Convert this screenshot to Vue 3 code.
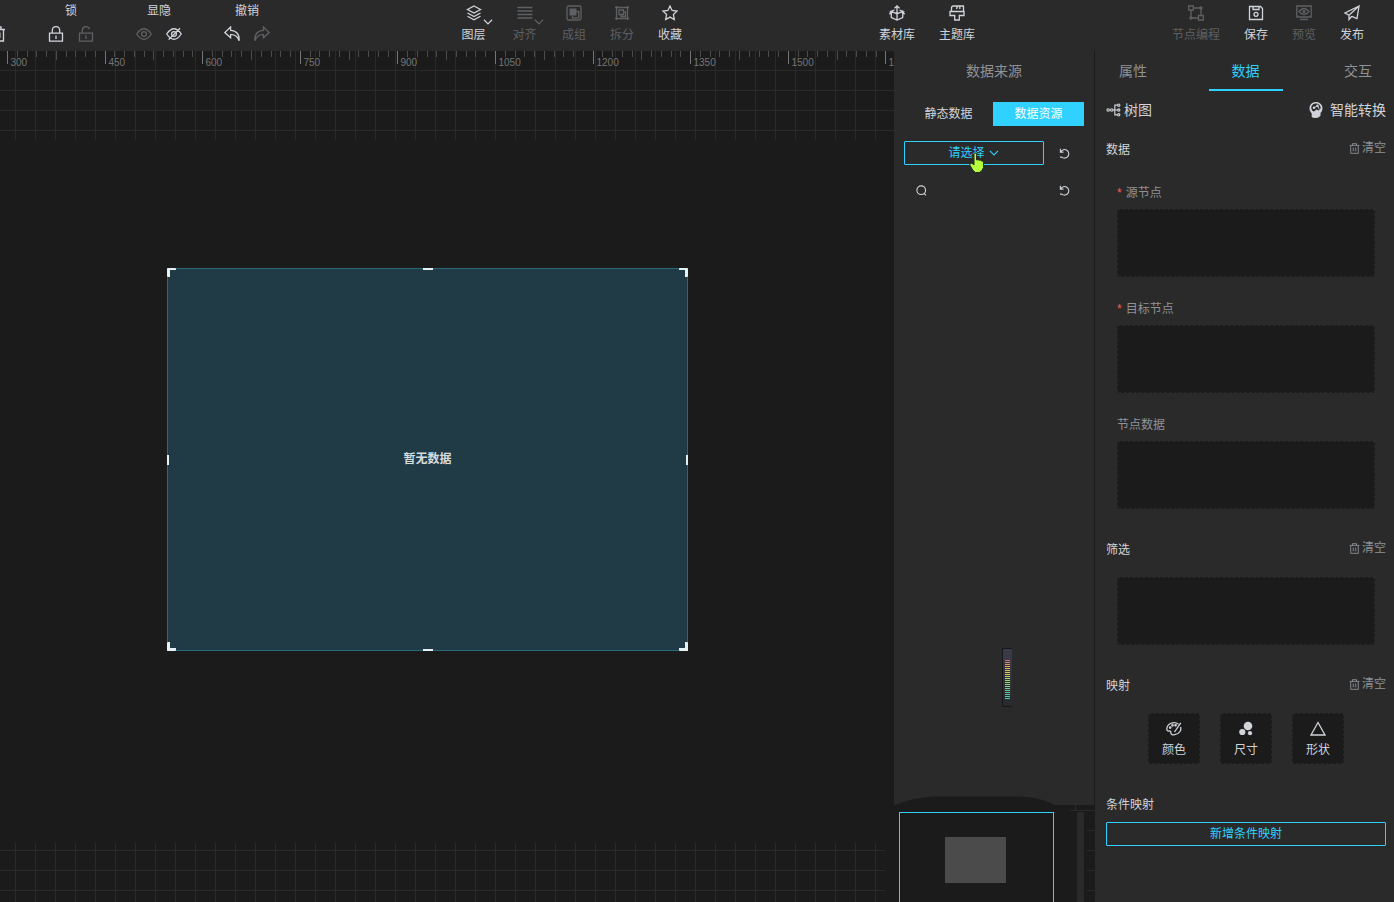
<script setup>
import { ref } from 'vue'

const groups = [
  { label: '锁', items: [{ icon: 'lock' }, { icon: 'unlock', off: true }] },
  { label: '显隐', items: [{ icon: 'eye', off: true }, { icon: 'eye-off' }] },
  { label: '撤销', items: [{ icon: 'undo' }, { icon: 'redo', off: true }] }
]
const arrange = [
  { icon: 'layers', label: '图层', menu: true },
  { icon: 'align', label: '对齐', menu: true, off: true },
  { icon: 'group', label: '成组', off: true },
  { icon: 'split', label: '拆分', off: true },
  { icon: 'star', label: '收藏' }
]
const library = [
  { icon: 'box', label: '素材库' },
  { icon: 'brush', label: '主题库' }
]
const actions = [
  { icon: 'nodes', label: '节点编程', off: true, long: true },
  { icon: 'save', label: '保存' },
  { icon: 'preview', label: '预览', off: true },
  { icon: 'send', label: '发布' }
]
const ticks = Array.from({ length: 92 }, (_, i) => ({
  x: Math.round(7 + i * 9.76) + 0.5,
  h: i % 10 === 0 ? 13 : i % 5 === 0 ? 9 : 6,
  major: i % 10 === 0,
  label: 300 + i * 15
}))
const tabs = ['属性', '数据', '交互']
const tab = ref('数据')
const fields = [
  { label: '源节点', required: true },
  { label: '目标节点', required: true },
  { label: '节点数据' }
]
const mappings = [
  { icon: 'palette', label: '颜色' },
  { icon: 'bubbles', label: '尺寸' },
  { icon: 'triangle', label: '形状' }
]
const handles = ['tl', 'tr', 'bl', 'br', 't', 'b', 'l', 'r']
const levels = ['#3a3c44', '#3a3c44', '#3a3c44', '#e0685c', '#e0865c', '#e0985c', '#e0a85c', '#e0b45c', '#dcc060', '#d8c860', '#d4d064', '#c8d068', '#b8d06c', '#a8d070', '#9cd078', '#8cd080', '#7cd088', '#70d090', '#64cc98', '#5cc8a0', '#58c8a8', '#54c8b0', '#50c8b8']
</script>

<template>
  <div class="page">
    <svg class="sprite" aria-hidden="true">
      <symbol id="lock" viewBox="0 0 16 16"><path d="M1.500 7.200h13v8h-13zM4.300 7V4.200a3.700 3.700 0 0 1 7.400 0V7M8 9.500v3.500" /></symbol>
      <symbol id="unlock" viewBox="0 0 16 16"><path d="M1.500 7.200h13v8h-13zM4.300 7V4.200a3.700 3.700 0 0 1 7.200-1M8 9.500v3.500" /></symbol>
      <symbol id="eye" viewBox="0 0 16 16"><path d="M.7 8Q8-2.500 15.300 8 8 18.500.7 8z" /><circle cx="8" cy="8" r="2.400" /></symbol>
      <symbol id="eye-off" viewBox="0 0 16 16"><path d="M.7 8Q8-2.500 15.300 8 8 18.500.7 8zM2.600 13.600 14 2.200" /><circle cx="8" cy="8" r="2.400" /></symbol>
      <symbol id="undo" viewBox="0 0 16 16"><path d="M6.600 1 .8 6.600l5.800 5.200V8.600c4.600-.4 7 1.600 8.500 6.200.5-6-2-10-8.500-10.400z" /></symbol>
      <symbol id="redo" viewBox="0 0 16 16"><path d="M9.400 1l5.800 5.600-5.800 5.200V8.600c-4.600-.4-7 1.600-8.500 6.200-.5-6 2-10 8.500-10.400z" /></symbol>
      <symbol id="trash" viewBox="0 0 16 16"><path d="M1 3.500h14M5 3.500V1h6v2.500M2.500 3.500V15h11V3.500M6.200 6.500v5.500M9.800 6.500v5.500" /></symbol>
      <symbol id="layers" viewBox="0 0 16 16"><path d="M8 1l6.500 3.500L8 8 1.500 4.500zM1.500 8 8 11.500 14.500 8M1.500 11.300 8 14.800l6.500-3.500" /></symbol>
      <symbol id="align" viewBox="0 0 16 16"><path stroke-width="1.700" d="M.5 2.500h15M.5 6h15M.5 9.500h15M.5 13h15" /></symbol>
      <symbol id="group" viewBox="0 0 16 16"><rect x="1" y="1" width="14" height="14" rx="1.500" /><path class="solid" d="M3.500 3.500h7v7h-7z" /><path d="M10.500 6.500h2.300v6.300H6.500v-2.300" /></symbol>
      <symbol id="split" viewBox="0 0 16 16"><path d="M2.500 1v14M13.500 1v14M1 2.500h14M1 13.500h14M5 5h4.500v4.500H5zM9.500 7h2v4.500H7v-2" /></symbol>
      <symbol id="star" viewBox="0 0 16 16"><path d="M8 1l2.100 4.500 4.900.6-3.600 3.400.9 5L8 12.100l-4.300 2.400.9-5L1 6.100l4.900-.6z" /></symbol>
      <symbol id="box" viewBox="0 0 16 16"><path d="M8 8.500V1M5.500 3.200 8 .9l2.500 2.300M5.500 5 1.800 6.300 8 8.700l6.200-2.400L10.500 5M2.300 6.500v6L8 15l5.700-2.500v-6M8 8.500V15M.5 9.300l1.800-3M15.500 9.300l-1.800-3" /></symbol>
      <symbol id="brush" viewBox="0 0 16 16"><path d="M2.500 6.500V3q0-2 2-2h10v5.500M1 6.500h14v4h-4.700V15H5.700v-4.500H1zM10.800 1v3M7.500 4l1-3" /></symbol>
      <symbol id="nodes" viewBox="0 0 16 16"><path d="M.7 1h4.600v4H.7zM10.500 10.500h4.800v4.500h-4.800zM3 5v8h7.500M5.500 3H13v7.500" /><circle cx="13" cy="3" r="1" /><circle cx="3" cy="13" r="1" /></symbol>
      <symbol id="save" viewBox="0 0 16 16"><path d="M1.500 1.500h11l2 2v11h-13zM5 1.500v3h6v-3" /><circle cx="8" cy="9.300" r="2" /></symbol>
      <symbol id="preview" viewBox="0 0 16 16"><path d="M.8 1h14.400v11H.8zM4 14.500h8M3 6.500q5-6 10 0-5 6-10 0z" /><circle class="solid" cx="8" cy="6.500" r="1.600" /></symbol>
      <symbol id="send" viewBox="0 0 16 16"><path d="M15 1 1 8l4 2.200L15 1l-2 12.500-5.200-2.200M5 10.200v4.300l2.800-3.200" /></symbol>
      <symbol id="down" viewBox="0 0 16 16"><path d="M1.500 4.500 8 11l6.500-6.500" /></symbol>
      <symbol id="refresh" viewBox="0 0 16 16"><path d="M2 1v5h4.500M2.500 5.600A6.200 6.200 0 1 1 4 13.200H1.500" /></symbol>
      <symbol id="search" viewBox="0 0 16 16"><circle cx="7.600" cy="7.600" r="6.300" /><path d="M11.500 12l3 3" /></symbol>
      <symbol id="tree" viewBox="0 0 16 16"><circle cx="1.900" cy="8" r="1.400" /><circle cx="6" cy="8" r="1.400" /><circle cx="14" cy="2.500" r="1.300" /><circle cx="14" cy="8" r="1.300" /><circle cx="14" cy="13.500" r="1.300" /><path d="M7.400 8h5.300M12.700 2.500H9.500v11h3.200M3.300 8h1.300" /></symbol>
      <symbol id="brain" viewBox="0 0 16 16"><path class="solid" fill-rule="evenodd" d="M8 0C3.500 0 1.500 3 1.500 6.500c0 2.500 1.500 3.500 2.200 5V15c2 1.300 4.500 1 6.300.8l2.500-2V11l1.500-2 .5-3C14.300 2.500 11.500 0 8 0zM3.200 5.500C3.500 3 5.500 1.500 8 1.500s4.800 2 4.700 4.700L10.500 8.500 8.500 7.500 6 9.500 4 8.500z" /><circle class="solid" cx="6" cy="5.800" r="1.300" /><circle class="solid" cx="9.500" cy="3.800" r="1.200" /><path stroke-width="1" d="M6 5.800l3.500-2 1.500 3" /></symbol>
      <symbol id="palette" viewBox="0 0 16 16"><path d="M12.500 3.200C8-.2 1 2.500.8 8c0 2 1 2.200 2.400 2 1.500-.2 1.800.8 1.600 2 .2 3 7 2 9.200-1.500.8-1.300 1-3 .6-4.500M14.800 1.800 8.500 11" /><circle cx="4.200" cy="6.600" r=".7" /><circle cx="6.500" cy="4.300" r=".7" /><circle cx="9.600" cy="4.300" r=".7" /></symbol>
      <symbol id="bubbles" viewBox="0 0 16 16"><circle class="solid" cx="10" cy="5" r="4.300" /><circle class="solid" cx="4.300" cy="11" r="3.100" /><circle class="solid" cx="12" cy="12.200" r="2.100" /></symbol>
      <symbol id="triangle" viewBox="0 0 16 16"><path d="M8 1.500 15 14H1z" /></symbol>
    </svg>

    <header class="topbar">
      <div class="edit">
        <button class="icon-btn first" aria-label="删除"><svg class="icon"><use href="#trash" /></svg></button>
        <div v-for="g in groups" :key="g.label" class="pair">
          <span class="pair-label">{{ g.label }}</span>
          <div class="pair-icons">
            <button v-for="i in g.items" :key="i.icon" class="icon-btn" :class="{ off: i.off }" :aria-label="g.label">
              <svg class="icon"><use :href="'#' + i.icon" /></svg>
            </button>
          </div>
        </div>
      </div>
      <nav v-for="(set, n) in [arrange, library, actions]" :key="n" class="tools" :class="'tools-' + n">
        <button v-for="t in set" :key="t.label" class="tool" :class="{ off: t.off, menu: t.menu, long: t.long }">
          <svg class="icon"><use :href="'#' + t.icon" /></svg>
          <span>{{ t.label }}</span>
          <svg v-if="t.menu" class="caret"><use href="#down" /></svg>
        </button>
      </nav>
    </header>

    <main class="work">
      <section class="canvas">
        <div class="grid-top">
          <svg class="ruler">
            <template v-for="t in ticks" :key="t.x">
              <line :x1="t.x" :x2="t.x" y1="0" :y2="t.h" :class="{ major: t.major }" />
              <text v-if="t.major" :x="t.x + 3" y="15">{{ t.label }}</text>
            </template>
          </svg>
        </div>
        <div class="grid-bottom"></div>
        <div class="widget">
          <span>暂无数据</span>
          <i v-for="h in handles" :key="h" class="handle" :class="h"></i>
        </div>
      </section>

      <aside class="source">
        <div class="source-body">
          <h2 class="source-title">数据来源</h2>
          <div class="switch">
            <button>静态数据</button>
            <button class="on">数据资源</button>
          </div>
          <div class="row">
            <div class="picker">
              <select aria-label="数据资源"><option>请选择</option></select>
              <svg class="chev"><use href="#down" /></svg>
              <svg class="hand" viewBox="0 0 16 22"><path d="M5 2.500q0-1.500 1.300-1.500t1.300 1.500V8l1.300-.4 1.300.6 1.200-.1 1.200.8 1.400.3.500 1.300v5l-1.800 3.500-2.500 1.500H6.500L4 18.500.8 13l.4-1.500 1.600-.3L5 13z" /></svg>
            </div>
            <button class="mini" aria-label="刷新"><svg><use href="#refresh" /></svg></button>
          </div>
          <div class="row search">
            <label class="find"><svg><use href="#search" /></svg><input type="text" aria-label="搜索" /></label>
            <button class="mini" aria-label="刷新"><svg><use href="#refresh" /></svg></button>
          </div>
          <div class="meter"><i v-for="(c, i) in levels" :key="i" :style="{ background: c }"></i></div>
          <svg class="bump" viewBox="0 0 160 9" preserveAspectRatio="none"><path d="M0 9Q18 1 40 .5H125Q145 1 160 9z" /></svg>
        </div>
        <div class="minimap">
          <div class="view"><div class="sheet"></div></div>
          <div class="scroll"></div>
          <div class="marks"></div>
        </div>
      </aside>

      <aside class="panel">
        <div class="tabs">
          <button v-for="t in tabs" :key="t" :class="{ on: t === tab }" @click="tab = t">{{ t }}</button>
        </div>
        <div class="content">
          <div class="chart">
            <span class="kind"><svg><use href="#tree" /></svg>树图</span>
            <button class="smart"><svg><use href="#brain" /></svg>智能转换</button>
          </div>
          <div class="head"><h3>数据</h3><button class="clear"><svg><use href="#trash" /></svg>清空</button></div>
          <div class="fields">
            <div v-for="f in fields" :key="f.label" class="field">
              <div class="name"><b v-if="f.required">*</b>{{ f.label }}</div>
              <div class="drop"></div>
            </div>
          </div>
          <div class="head next"><h3>筛选</h3><button class="clear"><svg><use href="#trash" /></svg>清空</button></div>
          <div class="filter drop"></div>
          <div class="head next"><h3>映射</h3><button class="clear"><svg><use href="#trash" /></svg>清空</button></div>
          <div class="maps">
            <button v-for="m in mappings" :key="m.label"><svg class="icon"><use :href="'#' + m.icon" /></svg>{{ m.label }}</button>
          </div>
          <h3 class="cond">条件映射</h3>
          <button class="add">新增条件映射</button>
        </div>
      </aside>
    </main>
  </div>
</template>

<style>
body {
  background: #1b1b1b;
}
</style>

<style scoped>
.page {
  height: 100vh;
  display: flex;
  flex-direction: column;
  overflow: hidden;
  color: #d0d4da;
  font: 12px/16px "Liberation Sans", "Noto Sans CJK SC", sans-serif;
}
.page * { box-sizing: border-box; }
.sprite { position: absolute; width: 0; height: 0; }
button, select, input {
  font: inherit;
  color: inherit;
  background: none;
  border: 0;
  padding: 0;
  margin: 0;
}
h2, h3 { margin: 0; font-weight: 400; font-size: 12px; }
svg { fill: none; stroke: currentColor; stroke-width: 1.3; flex: none; }
.solid { fill: currentColor; stroke: none; }
.icon { width: 16px; height: 16px; display: block; }
.off { color: #5e6063; }

.topbar {
  height: 51px;
  flex: none;
  display: flex;
  justify-content: space-between;
  padding-right: 18px;
  background: #2a2a2a;
}
.edit { width: 275px; display: flex; gap: 28px; margin-top: 3px; }
.pair, .first { flex: none; }
.pair-label { display: block; text-align: center; }
.pair-icons { display: flex; }
.icon-btn { width: 30px; height: 30px; display: flex; align-items: center; justify-content: center; }
.first { margin: 16px 0 0 -17px; }
.tools { display: flex; }
.tool {
  position: relative;
  width: 48px;
  display: flex;
  flex-direction: column;
  align-items: center;
  gap: 6px;
  padding-top: 5px;
  white-space: nowrap;
}
.tool.menu { width: 51px; }
.tool.long { width: 72px; }
.tools-1 .tool { width: 60px; }
.caret { position: absolute; left: 35px; top: 17px; width: 10px; height: 10px; stroke-width: 2; }

.work { flex: 1; min-height: 0; display: flex; }
.canvas { position: relative; flex: 1; min-width: 0; display: flex; flex-direction: column; justify-content: space-between; overflow: hidden; }
.grid-top, .grid-bottom {
  background-image: linear-gradient(#2a2a2a 1px, transparent 1px), linear-gradient(90deg, #2a2a2a 1px, transparent 1px);
  background-size: 20px 20px;
}
.grid-top { height: 89px; background-position: 0 19px, 15px 0; }
.grid-bottom { height: 59px; margin-right: 9px; background-position: 0 7px, 15px 0; }
.ruler { display: block; width: 100%; height: 18px; stroke-width: 1; }
.ruler line { stroke: #4a4c4f; }
.ruler line.major { stroke: #757575; }
.ruler text { fill: #757575; stroke: none; font-size: 10px; }

.widget {
  position: absolute;
  left: 167px;
  top: 217px;
  width: 521px;
  height: 383px;
  padding-bottom: 2px;
  display: flex;
  align-items: center;
  justify-content: center;
  background: #213b46;
  border: 1px solid #26697a;
  color: #d5dde0;
  font-weight: 700;
}
.handle { position: absolute; border: 0 solid #e6f1f4; }
.tl, .tr, .bl, .br { width: 9px; height: 9px; border-radius: 1px; }
.tl { left: -1px; top: -1px; border-width: 2px 0 0 3px; }
.tr { right: -1px; top: -1px; border-width: 2px 3px 0 0; }
.bl { left: -1px; bottom: -1px; border-width: 0 0 3px 3px; }
.br { right: -1px; bottom: -1px; border-width: 0 3px 3px 0; }
.t, .b { left: 255px; width: 10px; border-top-width: 2px; }
.t { top: -1px; }
.b { bottom: -1px; }
.l, .r { top: 186px; height: 10px; border-left-width: 2px; }
.l { left: -1px; }
.r { right: -1px; }

.source { width: 200px; flex: none; display: flex; flex-direction: column; }
.source-body { position: relative; flex: 1; padding: 0 10px; background: #2a2a2a; }
.source-title { height: 40px; line-height: 40px; font-size: 14px; text-align: center; color: #8f9296; }
.switch { display: flex; height: 24px; margin-top: 11px; }
.switch button { flex: 1; }
.switch .on { flex: 0 0 91px; background: #30d1ff; color: #fff; }
.row { display: flex; height: 24px; margin-top: 15px; }
.row.search { margin-top: 13px; }
.picker { position: relative; flex: 1; min-width: 0; color: #30d1ff; }
.picker select {
  appearance: none;
  width: 100%;
  height: 24px;
  padding-right: 15px;
  border: 1px solid #30d1ff;
  border-radius: 1px;
  text-align: center;
  text-align-last: center;
}
.chev { position: absolute; left: 85px; top: 7px; width: 10px; height: 10px; stroke-width: 1.8; }
.hand { position: absolute; left: 65px; top: 11px; width: 16px; height: 22px; fill: #b6ff3c; stroke: #20281c; stroke-width: 1; }
.mini { width: 40px; flex: none; display: flex; align-items: center; justify-content: center; }
.mini svg { width: 11px; height: 11px; stroke-width: 1.6; }
.find { flex: 1; min-width: 0; display: flex; align-items: center; gap: 8px; padding-left: 12px; }
.find svg { width: 11px; height: 11px; stroke-width: 1.6; }
.find input { flex: 1; min-width: 0; outline: 0; }
.meter {
  position: absolute;
  left: 108px;
  bottom: 98px;
  width: 10px;
  height: 59px;
  padding: 5px 2px 0 2px;
  display: flex;
  flex-direction: column;
  gap: 1px;
  border: 1px solid #17171a;
  border-right: 0;
  border-radius: 2px;
  background: linear-gradient(#383b4c, #2a2a2a);
}
.meter i { height: 1px; flex: none; }
.bump { position: absolute; left: 1px; bottom: 0; width: 160px; height: 9px; stroke: none; fill: #1b1b1b; }
.minimap { position: relative; height: 97px; display: flex; padding: 7px 0 0 5px; }
.minimap::before { content: ""; position: absolute; right: 0; top: 5px; width: 24px; height: 1px; background: #2a2a2a; }
.minimap::after { content: ""; position: absolute; right: 18px; top: 0; width: 1px; height: 5px; background: #2a2a2a; }
.view { width: 155px; border: 1px solid #30d1ff; border-bottom: 0; padding: 24px 0 0 45px; }
.sheet { width: 61px; height: 46px; background: #4b4b4b; }
.scroll { width: 7px; margin-left: 23px; background: #2a2a2a; border-radius: 2px 2px 0 0; }
.marks { flex: 1; margin: -2px 0 0 3px; background: repeating-linear-gradient(#2a2a2a 0 1px, transparent 1px 20px); }

.panel { width: 300px; flex: none; border-left: 1px solid #1b1b1b; background: #2a2a2a; }
.tabs { display: flex; justify-content: space-between; height: 40px; margin: 0 -1px 0 1px; color: #8f9296; font-size: 14px; }
.tabs button { width: 74px; border-bottom: 2px solid transparent; padding-top: 2px; }
.tabs .on { color: #30d1ff; border-color: #30d1ff; }
.content { padding: 0 8px 0 11px; }
.chart { height: 38px; display: flex; justify-content: space-between; align-items: center; font-size: 14px; }
.kind, .smart { display: flex; align-items: center; gap: 3px; }
.kind svg { width: 15px; height: 14px; }
.smart { gap: 6px; }
.smart svg { width: 16px; height: 16px; }
.head { height: 40px; display: flex; align-items: center; justify-content: space-between; }
.head h3 { padding-top: 2px; }
.head.next { margin-top: 20px; }
.clear { display: flex; align-items: center; gap: 2px; margin-bottom: 2px; color: #8f9296; }
.clear svg { width: 11px; height: 11px; }
.fields { display: flex; flex-direction: column; gap: 19px; margin: 12px 11px 0 11px; }
.name { height: 24px; line-height: 24px; margin-bottom: 4px; color: #8f9296; }
.field + .field { margin-top: 1px; }
.name b { margin-right: 4px; color: #ff5a4e; font-weight: 400; }
.drop { height: 68px; border: 1px dashed #1b1b1b; border-radius: 3px; background: #1b1b1b; background-clip: padding-box; }
.filter { margin: 8px 11px 0 11px; }
.maps { display: flex; justify-content: center; gap: 20px; margin-top: 8px; }
.maps button {
  width: 52px;
  height: 51px;
  display: flex;
  flex-direction: column;
  align-items: center;
  gap: 5px;
  padding-top: 7px;
  border: 1px dashed #1b1b1b;
  border-radius: 3px;
  background: #1b1b1b;
  background-clip: padding-box;
}
.cond { height: 24px; line-height: 24px; margin-top: 29px; }
.add { display: block; width: 100%; height: 24px; margin-top: 5px; border: 1px solid #30d1ff; border-radius: 1px; color: #30d1ff; }
</style>
